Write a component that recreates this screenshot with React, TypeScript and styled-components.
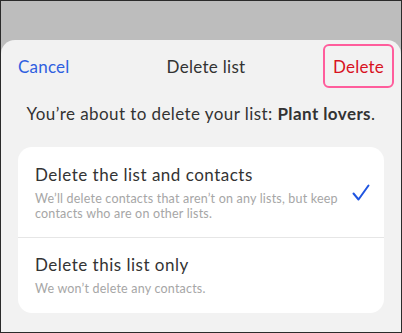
import styled, { createGlobalStyle } from 'styled-components'

const GlobalStyle = createGlobalStyle`
  html, body {
    margin: 0;
    padding: 0;
  }
  body {
    font-family: 'Lato', 'Noto Sans', sans-serif;
    -webkit-font-smoothing: antialiased;
  }
`

const options = [
  {
    title: 'Delete the list and contacts',
    note: [
      'We\u2019ll delete contacts that aren\u2019t on any lists, but keep',
      'contacts who are on other lists.'
    ],
    checked: true
  },
  {
    title: 'Delete this list only',
    note: ['We won\u2019t delete any contacts.'],
    checked: false
  }
]

const Check = () => (
  <svg width="18" height="17" viewBox="0 0 18 17" fill="none">
    <path
      d="M1.5 9.5 L6.5 15.5 L16.5 1.5"
      stroke="#1f55e0"
      strokeWidth="2"
      strokeLinecap="round"
      strokeLinejoin="round"
    />
  </svg>
)

const App = () => {
  return (
    <>
      <GlobalStyle />
      <Frame>
        <Sheet>
          <Header>
            <Cancel>{'Cancel'}</Cancel>
            <Title>{'Delete list'}</Title>
            <DeleteBtn>{'Delete'}</DeleteBtn>
          </Header>
          <Message>
            {'You\u2019re about to delete your list: '}
            <b>{'Plant lovers'}</b>
            {'.'}
          </Message>
          <Card>
            {options.map((o, i) => (
              <Row key={o.title} first={i === 0}>
                <RowText>
                  <RowTitle>{o.title}</RowTitle>
                  <RowNote>
                    {o.note.map((line) => (
                      <NoteLine key={line}>{line}</NoteLine>
                    ))}
                  </RowNote>
                </RowText>
                <CheckSlot>{o.checked && <Check />}</CheckSlot>
              </Row>
            ))}
          </Card>
        </Sheet>
      </Frame>
    </>
  )
}

const Frame = styled.div`
  width: 402px;
  height: 333px;
  box-sizing: border-box;
  border: 1px solid #2b2b2b;
  background: #bdbdbd;
  display: flex;
  flex-direction: column;
  padding-top: 39px;
  overflow: hidden;
`

const Sheet = styled.div`
  flex: 1;
  background: #f2f2f2;
  border-radius: 14px 14px 0 0;
  display: flex;
  flex-direction: column;
`

const Header = styled.div`
  display: grid;
  grid-template-columns: 1fr auto 1fr;
  align-items: center;
  padding: 4px 7px 0 17px;
  height: 44px;
`

const Cancel = styled.span`
  color: #2f5fe0;
  font-size: 17px;
  letter-spacing: 0.2px;
  justify-self: start;
`

const Title = styled.span`
  color: #333;
  font-size: 17px;
  letter-spacing: 0.3px;
`

const DeleteBtn = styled.span`
  justify-self: end;
  color: #d8121f;
  font-size: 17px;
  letter-spacing: 0.2px;
  border: 2px solid #ff5d9c;
  border-radius: 6px;
  box-sizing: border-box;
  width: 71px;
  height: 44px;
  display: flex;
  align-items: center;
  justify-content: center;
`

const Message = styled.p`
  margin: 14px 0 0;
  text-align: center;
  color: #333;
  font-size: 17px;
  line-height: 24px;
  letter-spacing: 0.42px;

  b {
    font-weight: 700;
  }
`

const Card = styled.div`
  margin: 21px 17px 0;
  background: #fff;
  border-radius: 14px;
  overflow: hidden;
`

const Row = styled.div<{ first: boolean }>`
  display: flex;
  align-items: center;
  gap: 6px;
  padding: ${(p) => (p.first ? '16px 14px 16px 17px' : '15px 14px 17px 17px')};
  border-top: ${(p) => (p.first ? 'none' : '1px solid #e6e6e6')};
`

const RowText = styled.div`
  flex: 1;
  min-width: 0;
`

const RowTitle = styled.div`
  color: #333;
  font-size: 17px;
  line-height: 24px;
  letter-spacing: 0.5px;
`

const RowNote = styled.div`
  color: #a6a6a6;
  font-size: 12.5px;
  line-height: 15px;
  margin-top: 4px;
  letter-spacing: 0.2px;
`

const NoteLine = styled.div`
  white-space: nowrap;
`

const CheckSlot = styled.div`
  flex-shrink: 0;
  width: 18px;
  display: flex;
  justify-content: center;
`

export default App
